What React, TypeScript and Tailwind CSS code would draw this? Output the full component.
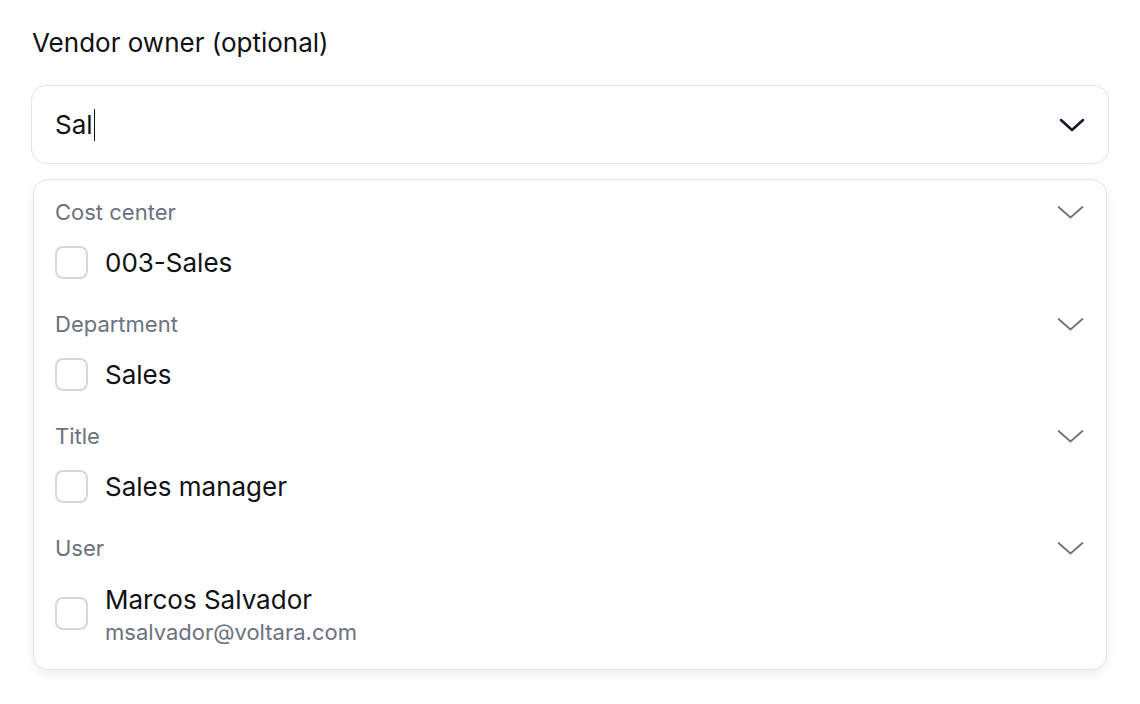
import React from "react";

const InputChevron = () => (
  <svg width="26" height="16" viewBox="0 0 26 16" fill="none" stroke="#111827" strokeWidth="2.5" strokeLinecap="round" strokeLinejoin="round">
    <path d="M2 3l11 10 11-10" />
  </svg>
);

const SectionChevron = () => (
  <svg width="27" height="15" viewBox="0 0 27 15" fill="none" stroke="#6b7280" strokeWidth="1.7" strokeLinecap="round" strokeLinejoin="round">
    <path d="M1.5 2l12 10.5 12-10.5" />
  </svg>
);

const Box = ({ className = "" }: { className?: string }) => (
  <div className={`w-[33px] h-[33px] shrink-0 rounded-[8px] border-2 border-[#d6d6df] bg-white ${className}`} />
);

const Section = ({ title, children, last }: { title: string; children: React.ReactNode; last?: boolean }) => (
  <div className={last ? "" : "pb-[30px]"}>
    <div className="flex items-center justify-between h-[30px]">
      <span className="text-[22px] text-[#6b7280]">{title}</span>
      <SectionChevron />
    </div>
    {children}
  </div>
);

export default function App() {
  return (
    <div className="w-[1140px] h-[704px] bg-white pl-[31px] pr-[31px] pt-[28px]" style={{ fontFamily: "Inter, 'Noto Sans', sans-serif" }}>
      <div className="text-[26px] leading-[30px] text-[#101114] pl-[1px]">Vendor owner (optional)</div>
      <div className="mt-[27px] h-[79px] rounded-[15px] border-[1.5px] border-[#e3e3e8] flex items-center justify-between pl-[23px] pr-[23px]">
        <div className="flex items-center text-[26px] text-[#101114]">
          <span>Sal</span>
          <span className="inline-block w-[1.5px] h-[32px] bg-[#101114] ml-[1px]" />
        </div>
        <InputChevron />
      </div>
      <div className="mt-[15px] mx-[2px] rounded-[15px] border-[1.5px] border-[#e3e3e8] shadow-[0_4px_10px_rgba(0,0,0,0.07)] pl-[21px] pr-[22px] pt-[17px] pb-[21px]">
        <Section title="Cost center">
          <div className="mt-[19px] flex items-center gap-[17px] h-[33px]">
            <Box />
            <span className="text-[26px] text-[#101114]">003-Sales</span>
          </div>
        </Section>
        <Section title="Department">
          <div className="mt-[19px] flex items-center gap-[17px] h-[33px]">
            <Box />
            <span className="text-[26px] text-[#101114]">Sales</span>
          </div>
        </Section>
        <Section title="Title">
          <div className="mt-[19px] flex items-center gap-[17px] h-[33px]">
            <Box />
            <span className="text-[26px] text-[#101114]">Sales manager</span>
          </div>
        </Section>
        <Section title="User" last>
          <div className="mt-[21px] flex items-start gap-[17px]">
            <Box className="mt-[13px]" />
            <div className="flex flex-col">
              <span className="text-[26px] leading-[32px] text-[#101114]">Marcos Salvador</span>
              <span className="text-[22px] leading-[32px] text-[#6b7280]">msalvador@voltara.com</span>
            </div>
          </div>
        </Section>
      </div>
    </div>
  );
}
